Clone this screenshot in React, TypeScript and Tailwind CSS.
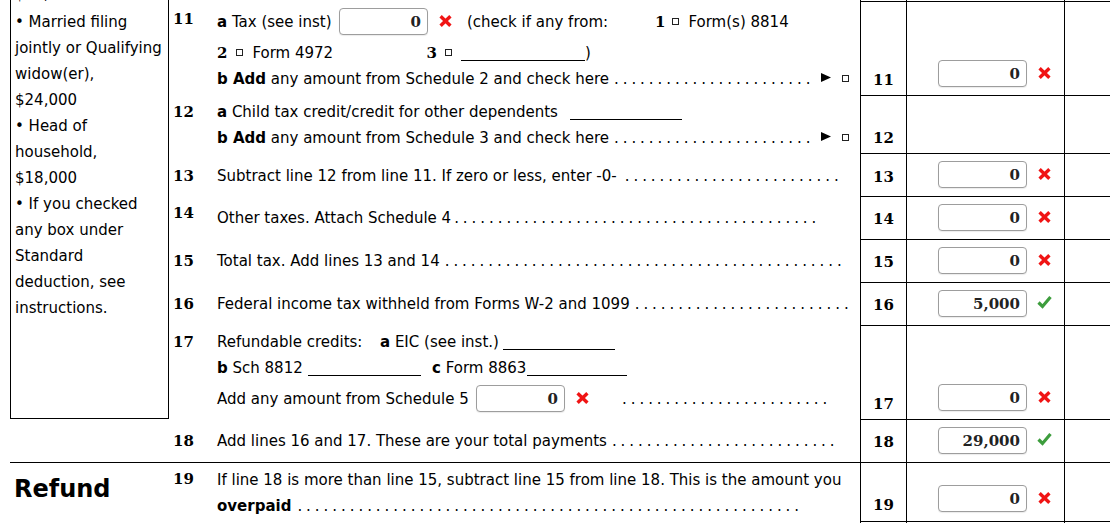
import React from "react";

const SERIF = "font-['DejaVu_Serif',serif] font-bold";

function Field({ value }: { value: string }) {
  return (
    <div className="w-[89px] h-[27px] shrink-0 border border-[#9d9d9d] rounded-[4px] bg-white flex items-center justify-end pr-[6px] pt-[2px] font-['DejaVu_Serif',serif] font-bold text-[15px] leading-[17px] text-[#222] shadow-[0_1px_1px_rgba(0,0,0,0.08)]">
      {value}
    </div>
  );
}

function XMark({ className = "" }: { className?: string }) {
  return (
    <span className={`shrink-0 ${className}`}>
      <svg width="13" height="12" viewBox="0 0 13 12" className="inline-block align-baseline">
        <path d="M1.6 1.3L11.4 10.7M11.4 1.3L1.6 10.7" stroke="#f01414" strokeWidth="3.4" />
      </svg>
    </span>
  );
}

function Check({ className = "" }: { className?: string }) {
  return (
    <span className={`shrink-0 ${className}`}>
      <svg width="15" height="14" viewBox="0 0 15 14" className="inline-block align-baseline">
        <path d="M1.5 7.5L5.5 11.5L13.5 2" fill="none" stroke="#3d9d3d" strokeWidth="3.2" />
      </svg>
    </span>
  );
}

function Sq({ className = "" }: { className?: string }) {
  return (
    <span className={`shrink-0 ${className}`}>
      <span className="inline-block w-[7px] h-[7px] border border-[#222] mb-[2px] align-baseline" />
    </span>
  );
}

function Tri({ className = "" }: { className?: string }) {
  return (
    <span className={`shrink-0 ${className}`}>
      <svg width="10" height="9" viewBox="0 0 10 9" className="inline-block align-baseline mb-[2px]">
        <path d="M0 0L10 4.5L0 9Z" fill="#000" />
      </svg>
    </span>
  );
}

function UL({ w }: { w: string }) {
  return (
    <span className="shrink-0">
      <span className={`inline-block ${w} border-b border-black -mb-[3px] align-baseline`} />
    </span>
  );
}

function Dots({ n, className = "ml-[5px]" }: { n: number; className?: string }) {
  return <span className={`shrink-0 tracking-[3.95px] ${className}`}>{".".repeat(n)}</span>;
}

function TRow({
  row,
  num,
  numCls,
  value,
  ok,
  inCls = "pb-[8px]",
}: {
  row: string;
  num: string;
  numCls: string;
  value?: string;
  ok?: boolean;
  inCls?: string;
}) {
  return (
    <>
      <div className={`${row} col-start-5 border-l border-t border-black flex items-end justify-center ${SERIF} ${numCls}`}>
        {num}
      </div>
      <div className={`${row} col-start-6 border-l border-t border-black flex items-end pl-[31px] ${inCls}`}>
        {value !== undefined && (
          <div className="flex items-baseline">
            <Field value={value} />
            {ok ? <Check className="ml-[10px]" /> : <XMark className="ml-[11px]" />}
          </div>
        )}
      </div>
      <div className={`${row} col-start-7 border-l border-t border-black`} />
    </>
  );
}

export default function App() {
  return (
    <div className="w-[1110px] h-[523px] overflow-hidden bg-white text-black font-['DejaVu_Sans',sans-serif] text-[15px] leading-[26px] whitespace-nowrap grid grid-cols-[10px_159px_48px_643px_46px_158px_46px] grid-rows-[1px_94px_58px_43px_43px_43px_43px_94px_43px_59px_2px]">
      {/* Left standard deduction box */}
      <div className="col-start-2 row-start-1 row-span-8 border-x border-b border-black overflow-hidden pl-[4px]">
        <div className="-mt-[19px]">
          <div className="h-[28px]">$12,000</div>
          <div>• Married filing</div>
          <div>jointly or Qualifying</div>
          <div>widow(er),</div>
          <div>$24,000</div>
          <div>• Head of</div>
          <div>household,</div>
          <div>$18,000</div>
          <div>• If you checked</div>
          <div>any box under</div>
          <div>Standard</div>
          <div>deduction, see</div>
          <div>instructions.</div>
        </div>
      </div>

      {/* top partial table row */}
      <div className="row-start-1 col-start-5 border-l border-black" />
      <div className="row-start-1 col-start-6 border-l border-black" />
      <div className="row-start-1 col-start-7 border-l border-black" />

      {/* Row 11 */}
      <div className={`row-start-2 col-start-3 pl-[4px] pt-[5px] ${SERIF}`}>11</div>
      <div className="row-start-2 col-start-4 pt-[7px]">
        <div className="flex items-baseline h-[27px]">
          <span className="w-[122px] shrink-0">
            <b>a</b> Tax (see inst)
          </span>
          <Field value="0" />
          <XMark className="ml-[11px]" />
          <span className="ml-[15px] w-[188px] shrink-0">(check if any from:</span>
          <span className={SERIF}>1</span>
          <Sq className="ml-[7px]" />
          <span className="ml-[9px]">Form(s) 8814</span>
        </div>
        <div className="mt-[5px] flex items-baseline">
          <span className={SERIF}>2</span>
          <Sq className="ml-[9px]" />
          <span className="ml-[9px] w-[174px] shrink-0">Form 4972</span>
          <span className={SERIF}>3</span>
          <Sq className="ml-[8px]" />
          <span className="ml-[9px] shrink-0">
            <UL w="w-[124px]" />
          </span>
          <span>)</span>
        </div>
        <div className="flex items-baseline">
          <div className="flex items-baseline w-[598px] shrink-0">
            <span className="shrink-0">
              <b>b Add</b> any amount from Schedule 2 and check here
            </span>
            <Dots n={23} />
          </div>
          <Tri className="ml-[6px]" />
          <Sq className="ml-[11px]" />
        </div>
      </div>
      <TRow row="row-start-2" num="11" numCls="pb-[2px]" value="0" />

      {/* Row 12 */}
      <div className={`row-start-3 col-start-3 pl-[4px] pt-[4px] ${SERIF}`}>12</div>
      <div className="row-start-3 col-start-4 pt-[4px]">
        <div className="flex items-baseline">
          <span className="w-[353px] shrink-0">
            <b>a</b> Child tax credit/credit for other dependents
          </span>
          <UL w="w-[112px]" />
        </div>
        <div className="flex items-baseline">
          <div className="flex items-baseline w-[598px] shrink-0">
            <span className="shrink-0">
              <b>b Add</b> any amount from Schedule 3 and check here
            </span>
            <Dots n={23} />
          </div>
          <Tri className="ml-[6px]" />
          <Sq className="ml-[11px]" />
        </div>
      </div>
      <TRow row="row-start-3" num="12" numCls="pb-[2px]" />

      {/* Row 13 */}
      <div className={`row-start-4 col-start-3 pl-[4px] pt-[10px] ${SERIF}`}>13</div>
      <div className="row-start-4 col-start-4 pt-[10px] flex items-baseline">
        <span>Subtract line 12 from line 11. If zero or less, enter -0-</span>
        <Dots n={25} className="ml-[8px]" />
      </div>
      <TRow row="row-start-4" num="13" numCls="pb-[6px]" value="0" />

      {/* Row 14 */}
      <div className={`row-start-5 col-start-3 pl-[4px] pt-[4px] ${SERIF}`}>14</div>
      <div className="row-start-5 col-start-4 pt-[9px] flex items-baseline">
        <span>Other taxes. Attach Schedule 4</span>
        <Dots n={42} className="ml-[3px]" />
      </div>
      <TRow row="row-start-5" num="14" numCls="pb-[7px]" value="0" />

      {/* Row 15 */}
      <div className={`row-start-6 col-start-3 pl-[4px] pt-[9px] ${SERIF}`}>15</div>
      <div className="row-start-6 col-start-4 pt-[9px] flex items-baseline">
        <span>Total tax. Add lines 13 and 14</span>
        <Dots n={46} />
      </div>
      <TRow row="row-start-6" num="15" numCls="pb-[7px]" value="0" />

      {/* Row 16 */}
      <div className={`row-start-7 col-start-3 pl-[4px] pt-[9px] ${SERIF}`}>16</div>
      <div className="row-start-7 col-start-4 pt-[9px] flex items-baseline">
        <span>Federal income tax withheld from Forms W-2 and 1099</span>
        <Dots n={25} />
      </div>
      <TRow row="row-start-7" num="16" numCls="pb-[7px]" value="5,000" ok />

      {/* Row 17 */}
      <div className={`row-start-8 col-start-3 pl-[4px] pt-[4px] ${SERIF}`}>17</div>
      <div className="row-start-8 col-start-4 pt-[4px]">
        <div className="flex items-baseline">
          <span className="w-[163px] shrink-0">Refundable credits:</span>
          <span className="w-[123px] shrink-0">
            <b>a</b> EIC (see inst.)
          </span>
          <UL w="w-[112px]" />
        </div>
        <div className="flex items-baseline">
          <span className="w-[91px] shrink-0">
            <b>b</b> Sch 8812
          </span>
          <UL w="w-[113px]" />
          <span className="ml-[11px] w-[95px] shrink-0">
            <b>c</b> Form 8863
          </span>
          <UL w="w-[100px]" />
        </div>
        <div className="mt-[4px] flex items-baseline h-[27px]">
          <span className="w-[259px] shrink-0">Add any amount from Schedule 5</span>
          <Field value="0" />
          <XMark className="ml-[11px]" />
          <Dots n={24} className="ml-[33px]" />
        </div>
      </div>
      <TRow row="row-start-8" num="17" numCls="pb-[2px]" value="0" />

      {/* Row 18 */}
      <div className={`row-start-9 col-start-3 pl-[4px] pt-[9px] ${SERIF}`}>18</div>
      <div className="row-start-9 col-start-4 pt-[9px] flex items-baseline">
        <span>Add lines 16 and 17. These are your total payments</span>
        <Dots n={26} />
      </div>
      <TRow row="row-start-9" num="18" numCls="pb-[7px]" value="29,000" ok />

      {/* Row 19 */}
      <div className="row-start-10 col-start-2 border-t border-black pl-[4px] pt-[11px] text-[24px] leading-[30px] font-bold">
        Refund
      </div>
      <div className={`row-start-10 col-start-3 border-t border-black pl-[4px] pt-[3px] ${SERIF}`}>19</div>
      <div className="row-start-10 col-start-4 border-t border-black pt-[4px]">
        <div>If line 18 is more than line 15, subtract line 15 from line 18. This is the amount you</div>
        <div className="flex items-baseline">
          <b className="shrink-0">overpaid</b>
          <Dots n={58} className="ml-[6px]" />
        </div>
      </div>
      <TRow row="row-start-10" num="19" numCls="pb-[3px]" value="0" inCls="pb-[9px]" />

      {/* bottom partial row */}
      <div className="row-start-11 col-start-5 border-l border-t border-black" />
      <div className="row-start-11 col-start-6 border-l border-t border-black" />
      <div className="row-start-11 col-start-7 border-l border-t border-black" />
    </div>
  );
}
